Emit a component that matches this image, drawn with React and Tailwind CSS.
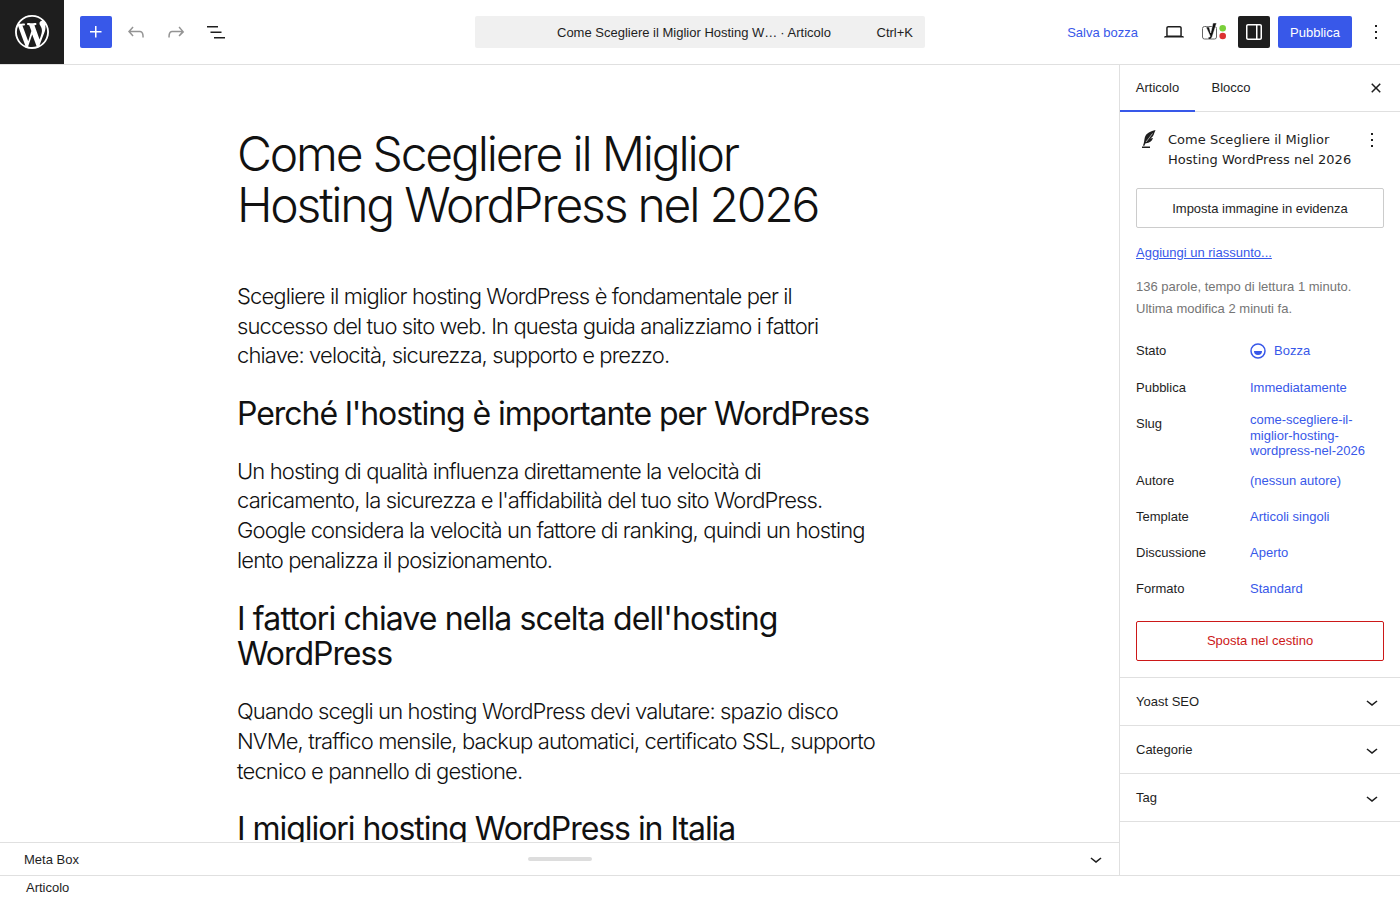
import React from "react";

const C = () => (
  <svg width="24" height="24" viewBox="0 0 24 24" fill="currentColor"><path d="M17.5 11.6L12 16l-5.500-4.400.9-1.200L12 14l4.500-3.600 1 1.200z" /></svg>
);

const Dots = () => (
  <svg width="24" height="24" viewBox="0 0 24 24" fill="currentColor"><path d="M13 19h-2v-2h2v2zm0-6h-2v-2h2v2zm0-6h-2V5h2v2z" /></svg>
);

const Row = ({ label, value, cls = "h-9 items-center" }) => (
  <div className={`flex ${cls}`}>
    <div className="w-[114px] shrink-0 text-[#1e1e1e]">{label}</div>
    <div className="text-[#3858e9]">{value}</div>
  </div>
);

const Panel = ({ name }) => (
  <div className="flex h-12 items-center justify-between border-b border-[#e0e0e0] pl-4 pr-4 pt-[2px] text-[13px] text-[#1e1e1e]">
    <span>{name}</span>
    <C />
  </div>
);

const P = ({ children, cls = "" }) => (
  <p className={`font-['Inter'] text-[22px] font-light leading-[29.7px] tracking-[-0.87px] text-[#111] ${cls}`}>{children}</p>
);
const H = ({ children, cls = "" }) => (
  <h2 className={`font-['Inter'] text-[32px] font-normal leading-[34.5px] tracking-[-1.05px] text-[#111] ${cls}`}>{children}</h2>
);

export default function App() {
  return (
    <div className="flex h-[900px] w-[1400px] flex-col overflow-hidden bg-white font-['Liberation_Sans',sans-serif] text-[13px] text-[#1e1e1e]">
      <header className="flex h-[65px] shrink-0 items-center border-b border-[#e0e0e0]">
        <div className="flex h-16 w-16 shrink-0 items-center justify-center bg-[#1e1e1e] text-white">
          <svg width="34" height="34" viewBox="0 0 20 20" fill="currentColor">
            <path d="M20 10c0-5.510-4.490-10-10-10C4.480 0 0 4.490 0 10c0 5.520 4.480 10 10 10 5.510 0 10-4.480 10-10zM7.780 15.370L4.370 6.220c.55-.02 1.170-.08 1.170-.08.500-.06.440-1.130-.06-1.110 0 0-1.450.11-2.370.11-.18 0-.37 0-.58-.01C4.120 2.690 6.890 1.030 10 1.030c2.330 0 4.450.87 6.030 2.340-.67-.11-1.630.38-1.630 1.550 0 .73.440 1.340.89 2.070.35.610.55 1.350.55 2.440 0 1.480-1.390 4.960-1.390 4.960l-3.010-8.300c.53-.02.83-.15.83-.15.5-.05.44-1.250-.06-1.220 0 0-1.440.12-2.380.12-.87 0-2.330-.12-2.330-.12-.5-.03-.56 1.200-.06 1.220l.92.08 1.260 3.410zM17.410 10c.24-.64.740-1.870.43-4.250.7 1.290 1.050 2.710 1.050 4.250 0 3.290-1.730 6.240-4.440 7.820.98-2.620 1.960-5.260 2.960-7.820zM6.100 18.090C3.120 16.650 1.110 13.530 1.110 10c0-1.300.23-2.480.72-3.590C3.250 10.300 4.670 14.200 6.100 18.090zm4.030-6.630l2.580 6.980c-.86.290-1.740.450-2.710.45-.79 0-1.570-.11-2.290-.33.810-2.380 1.620-4.740 2.420-7.100z" />
          </svg>
        </div>
        <div className="ml-4 flex h-8 w-8 items-center justify-center rounded-[2px] bg-[#3858e9] text-white">
          <svg width="24" height="24" viewBox="0 0 24 24" fill="currentColor"><path d="M11 12.500V17.500H12.500V12.500H17.500V11H12.500V6H11V11H6V12.500H11Z" /></svg>
        </div>
        <div className="ml-2 flex h-8 w-8 items-center justify-center text-[#949494]">
          <svg width="24" height="24" viewBox="0 0 24 24" fill="currentColor"><path d="M18.300 11.700c-.6-.6-1.400-.9-2.300-.9H6.700l2.900-3.300-1.100-1-4.500 5L8.500 16.500l1.100-1-2.900-3.300H16c.5 0 .9.200 1.300.5 1 1 1 3.400 1 4.500v.3h1.500v-.2c0-1.500 0-4.300-1.500-5.600z" /></svg>
        </div>
        <div className="ml-2 flex h-8 w-8 items-center justify-center text-[#949494]">
          <svg width="24" height="24" viewBox="0 0 24 24" fill="currentColor"><path d="M15.600 6.500l-1.100 1 2.900 3.300H8c-.9 0-1.700.3-2.300.9-1.400 1.500-1.400 4.200-1.400 5.600v.2h1.500v-.3c0-1.100 0-3.500 1-4.500.3-.3.700-.5 1.300-.5h9.200L14.500 15.500l1.100 1.100 4.600-4.600-4.600-5.500z" /></svg>
        </div>
        <div className="ml-2 flex h-8 w-8 items-center justify-center">
          <svg width="24" height="24" viewBox="0 0 24 24" fill="currentColor"><path d="M3 6h11v1.500H3V6zm3.500 5.500h11V13h-11v-1.500zM21 17H10v1.500h11V17z" /></svg>
        </div>
        <div className="ml-[243px] flex h-8 w-[450px] items-center rounded-[2px] bg-[#f0f0f0] pr-3 pt-[1px] text-[#1e1e1e]">
          <span className="ml-[82px]">Come Scegliere il Miglior Hosting W…</span>
          <span className="ml-[3px]">· Articolo</span>
          <span className="ml-auto">Ctrl+K</span>
        </div>
        <div className="ml-auto flex items-center pr-2">
          <span className="pt-[1px] text-[#3858e9]">Salva bozza</span>
          <div className="ml-[20px] flex h-8 w-8 items-center justify-center">
            <svg width="24" height="24" viewBox="0 0 24 24" fill="currentColor"><path d="M20.500 16h-.7V8c0-1.100-.9-2-2-2H6.200c-1.100 0-2 .9-2 2v8h-.7c-.8 0-1.500.7-1.500 1.500h20c0-.8-.7-1.500-1.500-1.500zM5.700 8c0-.3.200-.5.500-.5h11.600c.3 0 .5.200.5.500v7.600H5.700V8z" /></svg>
          </div>
          <div className="ml-2 h-8 w-8">
            <svg width="32" height="32" viewBox="0 0 32 32" fill="none">
              <rect x="4.500" y="10.500" width="14" height="12.500" rx="2" stroke="#666" strokeWidth="1" />
              <path d="M8 11h3.200l1.500 6L15 7h3.600l-4.500 14c-.6 1.700-1.700 2.500-3.900 2.500v-2.300c1.200 0 1.800-.3 2-1L8 11z" fill="#111" stroke="#fff" strokeWidth=".5" />
              <circle cx="24.700" cy="12.300" r="3.300" fill="#7ad03a" />
              <circle cx="24.700" cy="20" r="3.300" fill="#dc3232" />
            </svg>
          </div>
          <div className="ml-2 flex h-8 w-8 items-center justify-center rounded-[2px] bg-[#1e1e1e] text-white">
            <svg width="24" height="24" viewBox="0 0 24 24" fill="currentColor"><path d="M18 4H6c-1.100 0-2 .9-2 2v12c0 1.100.9 2 2 2h12c1.100 0 2-.9 2-2V6c0-1.100-.9-2-2-2zM5.500 18V6c0-.3.200-.5.500-.5h8v13H6c-.3 0-.5-.2-.5-.5zm13 0c0 .3-.2.500-.5.500h-2.500v-13H18c.3 0 .5.200.5.500v12z" /></svg>
          </div>
          <div className="ml-2 flex h-8 w-[74px] items-center justify-center rounded-[2px] bg-[#3858e9] pt-[1px] text-white">Pubblica</div>
          <div className="ml-2 flex h-8 w-8 items-center justify-center"><Dots /></div>
        </div>
      </header>

      <div className="flex min-h-0 flex-1">
        <div className="flex min-w-0 flex-1 flex-col">
          <main className="min-h-0 flex-1 overflow-hidden pl-[237px] pt-[63px]">
            <div className="w-[644px]">
              <h1 className="font-['Inter'] text-[48px] font-light leading-[51px] tracking-[-2.2px] text-[#111]">Come Scegliere il Miglior<br />Hosting WordPress nel 2026</h1>
              <P cls="mt-[52px]">Scegliere il miglior hosting WordPress è fondamentale per il<br />successo del tuo sito web. In questa guida analizziamo i fattori<br />chiave: velocità, sicurezza, supporto e prezzo.</P>
              <H cls="mt-[26px]">Perché l'hosting è importante per WordPress</H>
              <P cls="mt-[25px]">Un hosting di qualità influenza direttamente la velocità di<br />caricamento, la sicurezza e l'affidabilità del tuo sito WordPress.<br />Google considera la velocità un fattore di ranking, quindi un hosting<br />lento penalizza il posizionamento.</P>
              <H cls="mt-[27px]"><span className="tracking-[-0.88px]">I fattori chiave nella scelta dell'hosting</span><br />WordPress</H>
              <P cls="mt-[26px]">Quando scegli un hosting WordPress devi valutare: spazio disco<br />NVMe, traffico mensile, backup automatici, certificato SSL, supporto<br />tecnico e pannello di gestione.</P>
              <H cls="mt-[25px]">I migliori hosting WordPress in Italia</H>
            </div>
          </main>
          <div className="relative flex h-[33px] shrink-0 items-center justify-between border-t border-[#e0e0e0] pl-6 pr-[11px] text-[#1e1e1e]">
            <span className="pt-[1px]">Meta Box</span>
            <div className="absolute left-[528px] top-[14px] h-1 w-16 rounded-[2px] bg-[#ddd]" />
            <C />
          </div>
        </div>
        <aside className="w-[281px] shrink-0 border-l border-[#e0e0e0]">
          <div className="flex h-[47px] items-stretch justify-between border-b border-[#e0e0e0] pr-3">
            <div className="flex">
              <div className="-mb-px flex w-[75px] items-center justify-center border-b-2 border-[#3858e9]">Articolo</div>
              <div className="flex w-[72px] items-center justify-center">Blocco</div>
            </div>
            <div className="flex items-center">
              <svg width="24" height="24" viewBox="0 0 24 24" fill="currentColor"><path d="M12 13.060l3.712 3.713 1.061-1.060L13.061 12l3.712-3.712-1.060-1.060L12 10.939 8.288 7.227l-1.061 1.060L10.939 12l-3.712 3.712 1.060 1.061L12 13.061z" /></svg>
            </div>
          </div>
          <div className="border-b border-[#e0e0e0] px-4 pb-4 pt-[18px]">
            <div className="relative flex">
              <svg className="-mt-[2px] shrink-0" width="24" height="24" viewBox="0 0 24 24" fill="currentColor">
                <path d="M6 18.500h8V20H6z" />
                <path d="M19.500 2C15 3 10 5 8.800 9.500 8.200 12 8.200 15 7 17.500l1.200.4c.5-1 .9-2 1.400-2.700 3.400.2 6.400-1.800 7.400-5.200l-2.800.4c1.700-.9 3.100-2.300 3.700-4.200-.1 0 .9-2.200 1.600-4.200z" />
                <path d="M16.500 5.500L10 14" stroke="#fff" strokeWidth=".6" fill="none" />
              </svg>
              <div className="ml-2 font-['DejaVu_Sans'] text-[13px] leading-[20px] tracking-[0.02px] text-[#1e1e1e]">Come Scegliere il Miglior<br />Hosting WordPress nel 2026</div>
              <div className="absolute -top-[2px] right-0"><Dots /></div>
            </div>
            <div className="mt-[18px] flex h-10 items-center justify-center rounded-[2px] border border-[#ccc] pt-[1px]">Imposta immagine in evidenza</div>
            <div className="mt-4 leading-[18px] text-[#3858e9] underline">Aggiungi un riassunto...</div>
            <div className="mt-[14px] leading-[22px] text-[#757575]">136 parole, tempo di lettura 1 minuto.<br />Ultima modifica 2 minuti fa.</div>
            <div className="mt-[13px]">
              <Row label="Stato" value={
                <span className="flex items-center gap-2">
                  <svg width="16" height="16" viewBox="0 0 16 16"><circle cx="8" cy="8" r="7" fill="none" stroke="#3858e9" strokeWidth="1.500" /><path d="M4 8h8a4 4 0 0 1-8 0z" fill="#3858e9" /></svg>
                  Bozza
                </span>
              } />
              <Row label="Pubblica" value="Immediatamente" cls="mt-[1px] h-9 items-center" />
              <div className="flex pt-[6px]">
                <div className="w-[114px] shrink-0 pt-[4px] leading-[16px]">Slug</div>
                <div className="leading-[15.500px] text-[#3858e9]">come-scegliere-il-<br />miglior-hosting-<br />wordpress-nel-2026</div>
              </div>
              <Row label="Autore" value="(nessun autore)" cls="mt-[4px] h-9 items-center" />
              <Row label="Template" value="Articoli singoli" />
              <Row label="Discussione" value="Aperto" />
              <Row label="Formato" value="Standard" />
            </div>
            <div className="mt-[14px] flex h-10 items-center justify-center rounded-[2px] border border-[#cc1818] text-[#cc1818]">Sposta nel cestino</div>
          </div>
          <Panel name="Yoast SEO" />
          <Panel name="Categorie" />
          <Panel name="Tag" />
        </aside>
      </div>
      <footer className="flex h-[25px] shrink-0 items-center border-t border-[#e0e0e0] pl-[26px]">Articolo</footer>
    </div>
  );
}
